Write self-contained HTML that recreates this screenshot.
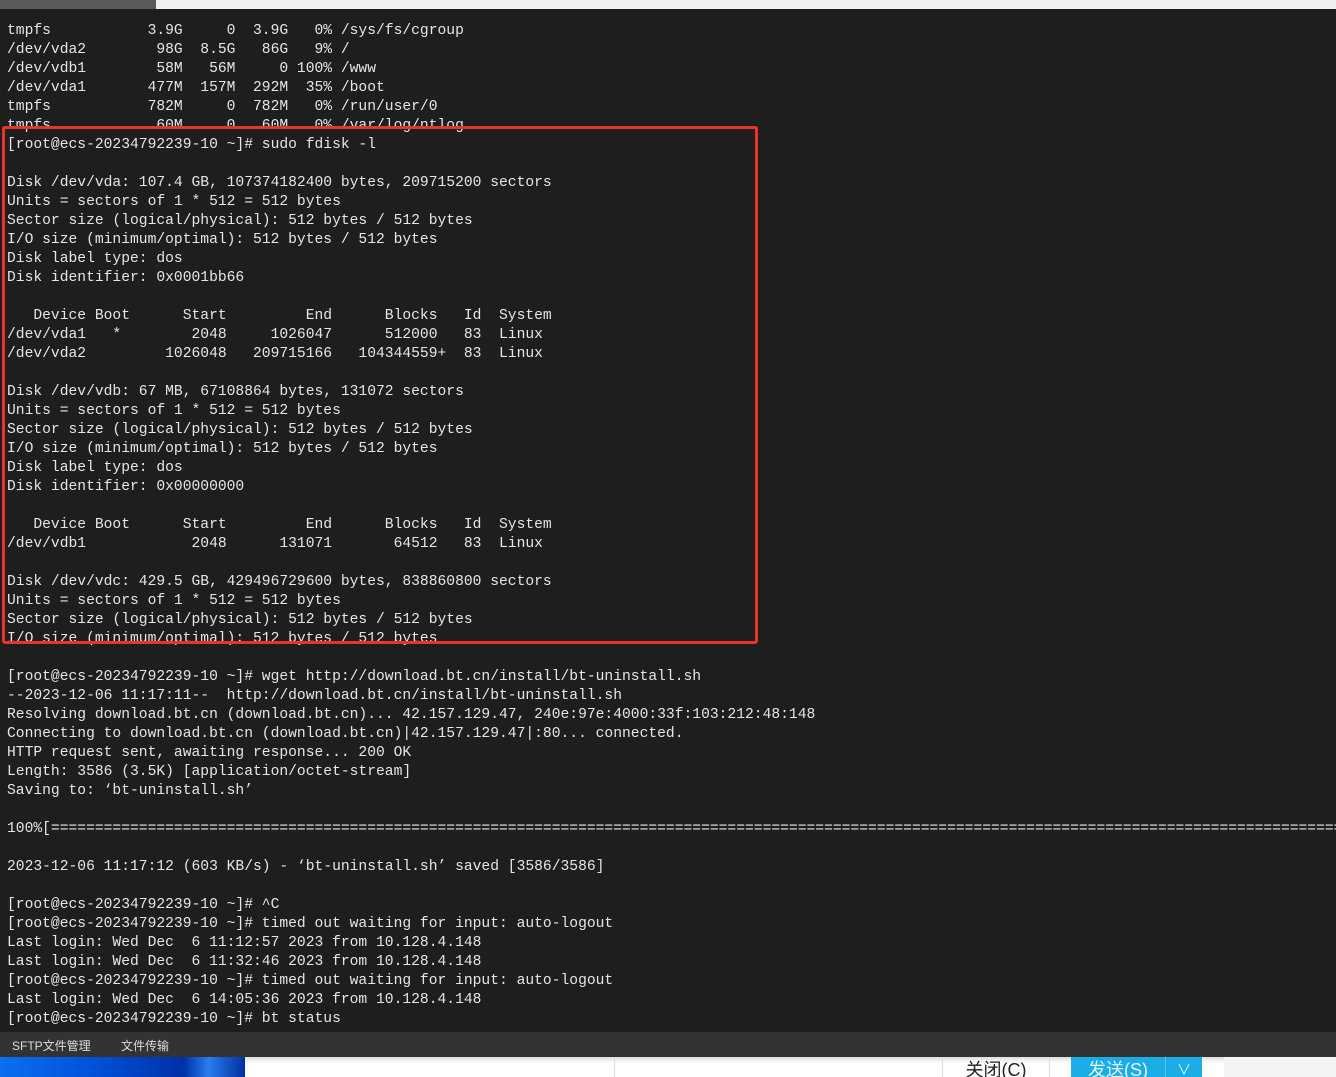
<!DOCTYPE html>
<html><head><meta charset="utf-8"><style>
html,body{margin:0;padding:0;width:1336px;height:1077px;overflow:hidden;background:#1e1e1e;}
#top{position:absolute;left:0;top:0;width:1336px;height:9px;background:#f0f0f0;}
#tab{position:absolute;left:0;top:0;width:156px;height:9px;background:#5a5a5a;}
#term{position:absolute;left:7px;top:22px;width:1329px;overflow:hidden;margin:0;font-family:"Liberation Mono",monospace;font-size:14.65px;line-height:19px;color:#e6e6e6;white-space:pre;}
#box{position:absolute;left:2px;top:126px;width:750px;height:512px;border:3px solid #e8342b;border-radius:3px;}
#bar{position:absolute;left:0;top:1032px;width:1336px;height:25px;background:#333;font-family:"Liberation Sans","Noto Sans CJK SC",sans-serif;font-size:12px;color:#ddd;}
#bar span{position:absolute;top:5px;}
#bottom{position:absolute;left:0;top:1057px;width:1336px;height:20px;background:#fff;font-family:"Liberation Sans","Noto Sans CJK SC",sans-serif;font-size:18px;overflow:hidden;}
</style></head><body>
<div id="top"><div id="tab"></div></div>
<pre id="term">tmpfs           3.9G     0  3.9G   0% /sys/fs/cgroup
/dev/vda2        98G  8.5G   86G   9% /
/dev/vdb1        58M   56M     0 100% /www
/dev/vda1       477M  157M  292M  35% /boot
tmpfs           782M     0  782M   0% /run/user/0
tmpfs            60M     0   60M   0% /var/log/ntlog
[root@ecs-20234792239-10 ~]# sudo fdisk -l

Disk /dev/vda: 107.4 GB, 107374182400 bytes, 209715200 sectors
Units = sectors of 1 * 512 = 512 bytes
Sector size (logical/physical): 512 bytes / 512 bytes
I/O size (minimum/optimal): 512 bytes / 512 bytes
Disk label type: dos
Disk identifier: 0x0001bb66

   Device Boot      Start         End      Blocks   Id  System
/dev/vda1   *        2048     1026047      512000   83  Linux
/dev/vda2         1026048   209715166   104344559+  83  Linux

Disk /dev/vdb: 67 MB, 67108864 bytes, 131072 sectors
Units = sectors of 1 * 512 = 512 bytes
Sector size (logical/physical): 512 bytes / 512 bytes
I/O size (minimum/optimal): 512 bytes / 512 bytes
Disk label type: dos
Disk identifier: 0x00000000

   Device Boot      Start         End      Blocks   Id  System
/dev/vdb1            2048      131071       64512   83  Linux

Disk /dev/vdc: 429.5 GB, 429496729600 bytes, 838860800 sectors
Units = sectors of 1 * 512 = 512 bytes
Sector size (logical/physical): 512 bytes / 512 bytes
I/O size (minimum/optimal): 512 bytes / 512 bytes

[root@ecs-20234792239-10 ~]# wget http://download.bt.cn/install/bt-uninstall.sh
--2023-12-06 11:17:11--  http://download.bt.cn/install/bt-uninstall.sh
Resolving download.bt.cn (download.bt.cn)... 42.157.129.47, 240e:97e:4000:33f:103:212:48:148
Connecting to download.bt.cn (download.bt.cn)|42.157.129.47|:80... connected.
HTTP request sent, awaiting response... 200 OK
Length: 3586 (3.5K) [application/octet-stream]
Saving to: ‘bt-uninstall.sh’

100%[==========================================================================================================================================================

2023-12-06 11:17:12 (603 KB/s) - ‘bt-uninstall.sh’ saved [3586/3586]

[root@ecs-20234792239-10 ~]# ^C
[root@ecs-20234792239-10 ~]# timed out waiting for input: auto-logout
Last login: Wed Dec  6 11:12:57 2023 from 10.128.4.148
Last login: Wed Dec  6 11:32:46 2023 from 10.128.4.148
[root@ecs-20234792239-10 ~]# timed out waiting for input: auto-logout
Last login: Wed Dec  6 14:05:36 2023 from 10.128.4.148
[root@ecs-20234792239-10 ~]# bt status</pre>
<div id="box"></div>
<div id="bar"><span style="left:12px">SFTP文件管理</span><span style="left:121px">文件传输</span></div>
<div id="bottom">
<div style="position:absolute;left:0;top:0;width:245px;height:20px;background:linear-gradient(90deg,#0a6ff0 0%,#0050d8 40%,#0030a8 75%,#2a7cf0 85%,#0030a0 100%);"></div>
<div style="position:absolute;left:245px;top:0;width:1091px;height:6px;background:linear-gradient(#ddd,#fff);"></div>
<div style="position:absolute;left:614px;top:0;width:1px;height:20px;background:#ddd;"></div>
<div style="position:absolute;left:942px;top:0;width:106px;height:20px;border-left:1px solid #ddd;border-right:1px solid #ddd;color:#222;text-align:center;line-height:26px;">关闭(C)</div>
<div style="position:absolute;left:1071px;top:0;width:131px;height:20px;background:#1aade8;color:#e8f6ff;line-height:26px;">
<span style="position:absolute;left:17px;">发送(S)</span>
<div style="position:absolute;left:94px;top:0;width:1px;height:20px;background:#5cc6f0;"></div>
<span style="position:absolute;left:106px;font-size:14px;">∨</span></div>
<div style="position:absolute;left:1224px;top:0;width:112px;height:20px;background:#f3f3f3;"></div>
</div>
</body></html>
